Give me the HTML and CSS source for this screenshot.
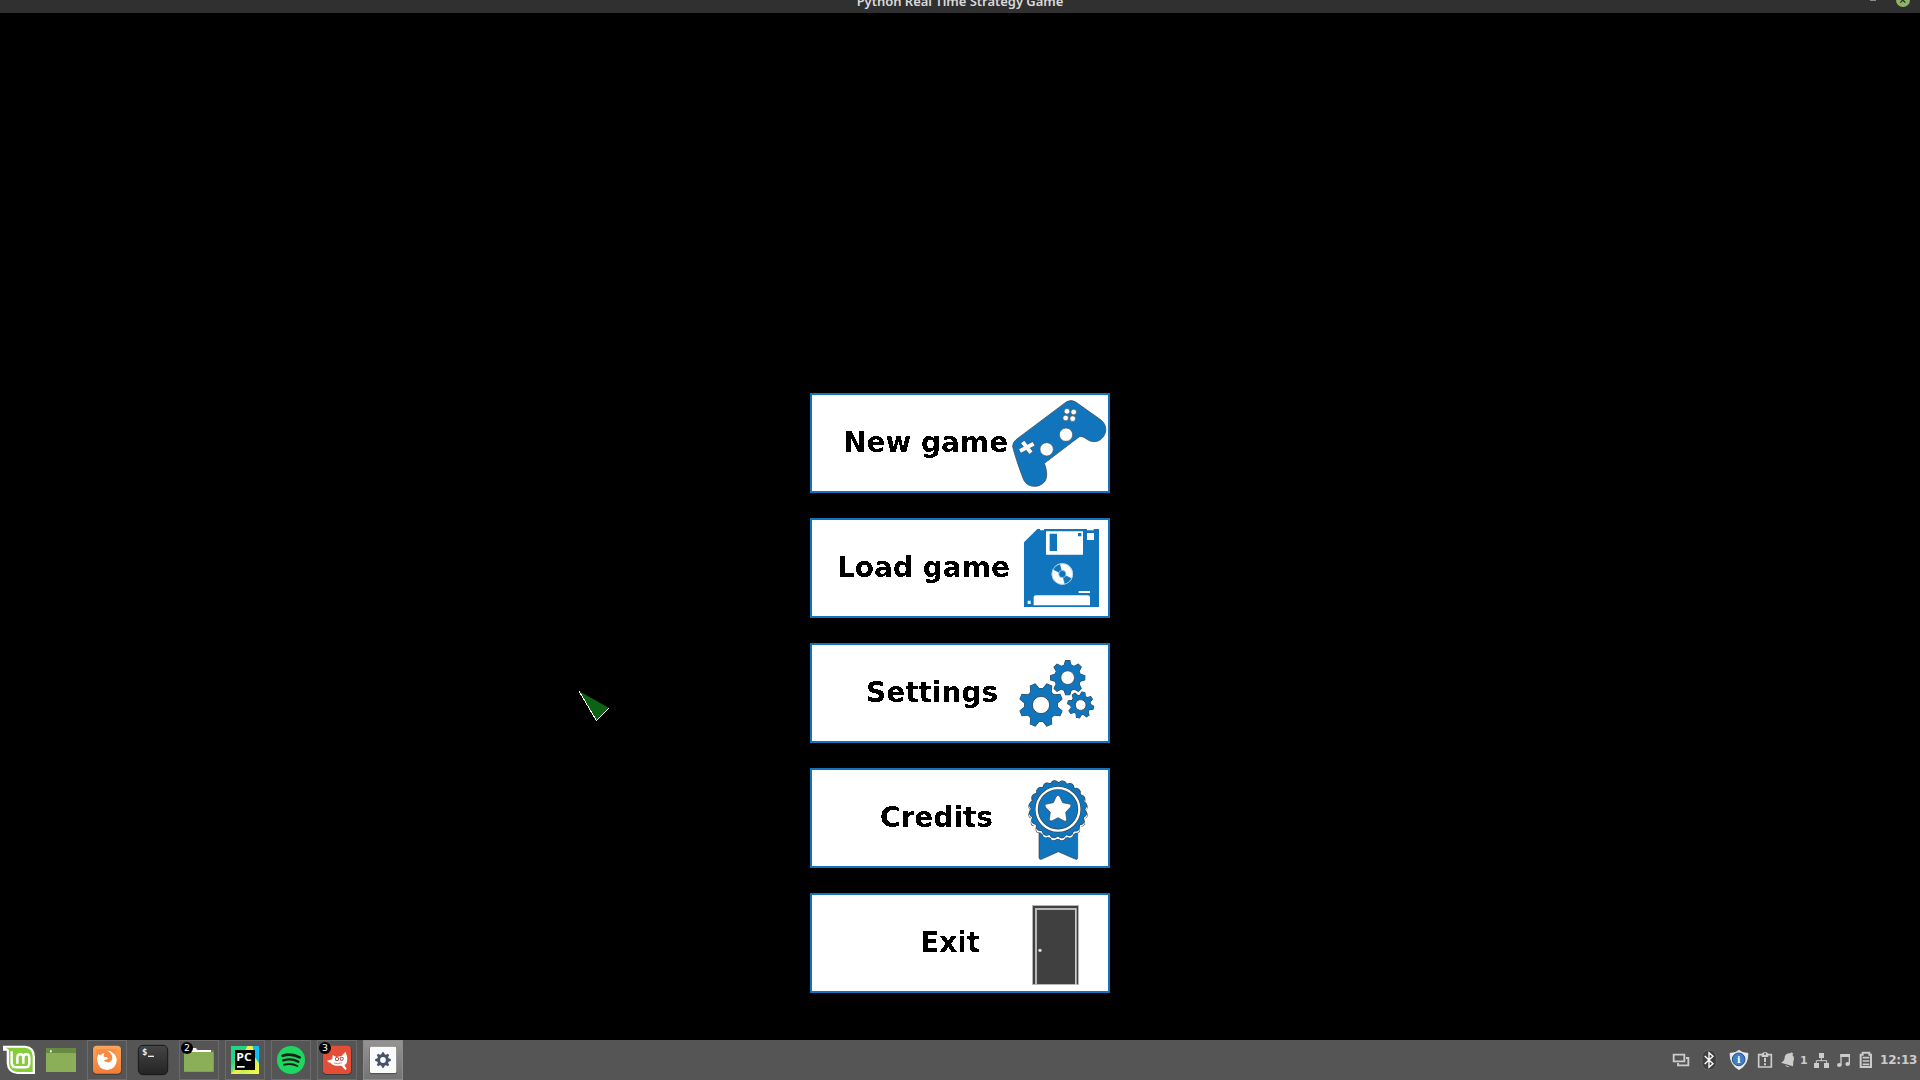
FILE: index.html
```html
<!DOCTYPE html>
<html lang="en">
<head>
<meta charset="utf-8">
<title>Python Real Time Strategy Game</title>
<link rel="stylesheet" href="styles.css">
</head>
<body>
<svg class="defs" width="0" height="0" aria-hidden="true">
  <defs>
    <filter id="crisp" x="0" y="0" width="100%" height="100%" color-interpolation-filters="sRGB">
      <feComponentTransfer><feFuncA type="discrete" tableValues="0 1"/></feComponentTransfer>
    </filter>
    <g id="gear">
      <circle r="49"/>
      <g id="bars"><path id="bar" d="M-14-45L-8-65H8L14-45V45L8 65H-8L-14 45Z"/><use href="#bar" transform="rotate(90)"/></g>
      <use href="#bars" transform="rotate(45)"/>
    </g>
    <linearGradient id="orange" x2="0" y2="1"><stop stop-color="#fba55b"/><stop offset="1" stop-color="#f37c35"/></linearGradient>
    <linearGradient id="dark" x2="0" y2="1"><stop stop-color="#454545"/><stop offset="1" stop-color="#242424"/></linearGradient>
    <linearGradient id="pc" x2="1" y2="1"><stop offset=".3" stop-color="#20d58a"/><stop offset=".65" stop-color="#c8ef55"/><stop offset="1" stop-color="#fcf84a"/></linearGradient>
  </defs>
</svg>

<header class="titlebar">
  <span class="title">Python Real Time Strategy Game</span>
  <svg class="controls" viewBox="0 0 240 39"><path fill="#8b8b8b" d="M90 0h18v3H90z"/><circle cx="189" cy="0" r="21" fill="#8fb368"/><path d="M181-8L196 8M196-8L181 8" stroke="#303030" stroke-width="4"/></svg>
</header>

<main class="game">
  <nav class="menu">
    <button class="item new"><span class="label">New game</span>
      <svg class="pic" viewBox="636 30 288 288">
        <path fill="#1175bd" stroke="#45515c" stroke-width="2.5" d="M800 50Q814 43 827 51L903 105C924 122 921 150 901 164C888 173 872 171 861 163Q844 149 834 158L733 235C740 253 744 276 734 290C717 310 685 308 673 288C667 277 641 202 638 184Q638 172 648 164Z"/>
        <g fill="#fff" stroke="#45515c" stroke-width="2"><circle cx="798" cy="149" r="20"/><circle cx="740" cy="193" r="20"/><circle cx="801" cy="79" r="8.5"/><circle cx="821" cy="81" r="8.5"/><circle cx="797" cy="99" r="8.5"/><circle cx="818" cy="101" r="8.5"/></g>
        <path d="M667 170L694 204M702 175L659 199" stroke="#45515c" stroke-width="15"/><path d="M668 171L693 203M701 176L660 198" stroke="#fff" stroke-width="12"/>
      </svg></button>
    <button class="item load"><span class="label">Load game</span>
      <svg class="pic" viewBox="636 30 288 288">
        <path fill="#1175bd" d="M712 57H897V291H672V97Z"/>
        <path fill="#fff" d="M738 64H849V134H738ZM861 69H882V90H861ZM720 57h12v4h-12zM861 57h20v4h-20zM836 243h34v6h-34zM683 272h9v10h-9zM701 286V262Q701 256 708 256H863Q870 256 870 262V286Z"/>
        <path fill="#1175bd" d="M749 71h22v52h-22zM834 69h10v10h-10z"/>
        <circle cx="787" cy="192" r="32" fill="#fff"/><path fill="#1175bd" d="M787 192L759 178A30 30 0 0 1 779 163ZM787 192L815 206A30 30 0 0 1 795 221Z"/><path d="M787 192L759 178M787 192L779 162M787 192L815 206M787 192L795 222" stroke="#1175bd" stroke-width="2"/><circle cx="787" cy="192" r="11" fill="#1175bd" stroke="#b9d7ec" stroke-width="2"/>
        <circle cx="787" cy="192" r="31" fill="none" stroke="#a4cae6" stroke-width="2"/>
      </svg></button>
    <button class="item settings"><span class="label">Settings</span>
      <svg class="pic" viewBox="636 30 288 288">
        <g fill="#1175bd">
          <g transform="translate(723 210) rotate(22.5)"><use href="#gear" stroke="#35414b" stroke-width="3"/><use href="#gear"/><circle r="26" fill="#fff" stroke="#35414b" stroke-width="2.5"/></g>
          <g transform="translate(803 128) scale(.79)"><use href="#gear" stroke="#35414b" stroke-width="4"/><use href="#gear"/><circle r="26" fill="#fff" stroke="#35414b" stroke-width="3"/></g>
          <g transform="translate(842 210) rotate(12) scale(.6)"><use href="#gear" stroke="#35414b" stroke-width="5"/><use href="#gear"/><circle r="27" fill="#fff" stroke="#35414b" stroke-width="4"/></g>
        </g>
      </svg></button>
    <button class="item credits"><span class="label">Credits</span>
      <svg class="pic" viewBox="636 30 288 288">
        <path fill="#1175bd" stroke="#35414b" stroke-width="2" d="M717 210H833V294Q832 301 825 297L775 275L724 298Q718 300 717 293Z"/>
        <g fill="none" stroke-linecap="round" transform="rotate(-9 774 153)"><circle cx="774" cy="153" r="80" stroke="#35414b" stroke-width="20" pathLength="20" stroke-dasharray="0 1"/><circle cx="774" cy="153" r="79" stroke="#fff" stroke-width="19" pathLength="20" stroke-dasharray="0 1"/></g>
        <circle cx="774" cy="153" r="84" fill="#fff"/>
        <g transform="rotate(-9 774 148)" fill="none" stroke-linecap="round"><circle cx="774" cy="148" r="75" stroke="#35414b" stroke-width="26" pathLength="20" stroke-dasharray="0 1"/><circle cx="774" cy="148" r="82" fill="#35414b"/><circle cx="774" cy="148" r="75" stroke="#1175bd" stroke-width="22" pathLength="20" stroke-dasharray="0 1"/></g>
        <circle cx="774" cy="148" r="80" fill="#1175bd"/>
        <circle cx="774" cy="148" r="64" fill="none" stroke="#35414b" stroke-width="11"/><circle cx="774" cy="148" r="64" fill="none" stroke="#fff" stroke-width="7"/>
        <path fill="#fff" stroke="#35414b" stroke-width="2" stroke-linejoin="round" d="M768 111Q774 101 780 111L788 128L808 132Q817 134 811 142L797 157L800 178Q799 187 791 182L774 173L757 182Q749 186 748 178L751 157L737 142Q731 134 740 132L760 128Z"/>
      </svg></button>
    <button class="item exit"><span class="label">Exit</span>
      <svg class="pic" viewBox="636 30 288 288">
        <path fill="#b4b4b4" d="M696 60H837V300H696Z"/><path fill="#404040" d="M699 63H834V297H699Z"/><path fill="#b7b7b7" d="M705 69H829V300H705Z"/><path fill="#404040" d="M711 75H825V297H711Z"/><path d="M828 70V300" stroke="#ddd" stroke-width="3"/><circle cx="720" cy="196" r="5" fill="#ddd"/>
      </svg></button>
  </nav>
  <svg class="pointer" viewBox="0 0 40 40"><path fill="#0c6412" d="M9 11L39 28L26 41Z"/><path d="M9 11L26.3 40.5L39 28" fill="none" stroke="#fff" shape-rendering="crispEdges"/></svg>
</main>

<footer class="panel">
  <div class="tasks">
    <svg class="mint" viewBox="0 30 105 120"><path fill="#fff" d="M9 47H76Q105 50 105 80V132H53Q22 130 20 99V62H9Z"/><path fill="#86cd39" d="M17 53H75Q98 55 98 80V126H53Q27 124 27 98V61Q26 56 17 53Z"/><path d="M35 64V98Q35 112 51 112H76Q88 112 88 99V84Q88 73 79 73Q70 73 70 84V101M70 84Q70 73 61 73Q52 73 52 84V101" fill="none" stroke="#fff" stroke-width="7.5"/></svg>
    <svg class="task" viewBox="123 30 120 120"><path fill="#8bae59" d="M138 54H228V126H138Z"/><path fill="#688b41" d="M138 54H228V69H138Z"/><path fill="#fff" d="M150 61h5v6h-5z"/></svg>
    <svg class="task open" viewBox="261 30 120 120"><rect x="278" y="48" width="86" height="86" rx="12" fill="#393939"/><rect x="279" y="47" width="84" height="84" rx="11" fill="url(#orange)"/><circle cx="321" cy="91" r="29" fill="#fff"/><path fill="#f78b42" d="M289 58H350L343 72Q336 63 322 61Q339 72 337 86Q335 95 327 97Q317 98 311 91L322 88Q326 84 321 82L312 80Q309 76 314 70Q305 70 302 76L295 73L290 85Z"/><path fill="#fff" d="M322 61Q343 66 350 90L340 97Q342 74 322 61ZM291 86L295 71Q297 78 303 76L311 81L306 94Z"/></svg>
    <svg class="task" viewBox="399 30 120 120"><rect x="415" y="46" width="88" height="88" rx="14" fill="url(#dark)" stroke="#181818" stroke-width="3"/><text class="term" x="426" y="74">$</text><path fill="#eee" d="M444 77h18v4h-18z"/></svg>
    <svg class="task open" viewBox="537 30 120 120"><path fill="#617e3e" d="M552 60H642V126H552Z"/><path fill="#fff" d="M552 54H588L592 60H633V68H552Z"/><rect x="552" y="66" width="89" height="59" rx="3" fill="#8bae59"/><circle cx="561" cy="54" r="18"/><text class="count" x="552" y="63">2</text></svg>
    <svg class="task open" viewBox="75 30 120 120"><path fill="url(#pc)" d="M93 48H177V132H93Z"/><path fill="#f3ed4c" d="M142 48H158L166 72V120H126L115 132H93L112 110Z"/><path fill="#0fbdee" d="M158 48H177V99L164 80Z"/><path d="M105 60H165V120H105Z"/><text class="pc" x="109" y="92" textLength="46" lengthAdjust="spacingAndGlyphs">PC</text><path fill="#fff" d="M111 108h23v5h-23z"/></svg>
    <svg class="task open" viewBox="213 30 120 120"><circle cx="273" cy="90" r="42" fill="#1ed760"/><g fill="none" stroke="#172019" stroke-linecap="round"><path stroke-width="8" d="M248 77Q275 69 299 82"/><path stroke-width="7" d="M250 91Q275 84 295 95"/><path stroke-width="6" d="M252 104Q274 98 292 108"/></g></svg>
    <svg class="task open" viewBox="351 30 120 120"><rect x="368" y="49" width="87" height="86" rx="12" fill="#393939"/><rect x="369" y="47" width="84" height="85" rx="11" fill="#e44d38"/><path fill="#fff" d="M398 75L409 81L425 78L436 65Q444 80 441 96Q440 103 433 105L440 116L436 120L424 107Q401 110 391 98Q385 98 381 92L397 88Z"/><circle cx="411" cy="87" r="6" fill="#a12b20"/><circle cx="425" cy="86" r="6" fill="#a12b20"/><circle cx="411" cy="87" r="3.5" fill="#fff"/><circle cx="425" cy="86" r="3.5" fill="#fff"/><path d="M402 99Q414 104 426 98" fill="none" stroke="#e44d38" stroke-width="2"/><circle cx="375" cy="54" r="18"/><text class="count" x="366" y="63">3</text></svg>
    <svg class="task open active" viewBox="489 30 120 120"><rect x="509" y="50" width="81" height="83" rx="4" fill="#555"/><rect x="510" y="50" width="79" height="79" rx="4" fill="#fafafa"/><g transform="translate(549 90) scale(.36)" fill="#465469"><use href="#gear"/><circle r="24" fill="#fafafa"/></g></svg>
  </div>
  <div class="tray">
    <svg class="w28" viewBox="21 30 84 120"><path d="M41 74H73V94H41Z M78 84H85V106H54V99" fill="none" stroke="#ccc" stroke-width="5.5"/></svg>
    <svg class="w28" viewBox="105 30 84 120"><rect x="126" y="60" width="43" height="60" rx="20" fill="#414141" stroke="#707070" stroke-width="2"/><path d="M134 78L159 101L147 112V68L159 79L134 102" fill="none" stroke="#fff" stroke-width="4"/></svg>
    <svg class="w31" viewBox="189 30 93 120"><path fill="#e9e9e9" stroke="#fff" stroke-width="2" d="M237 61Q247 70 264 70Q264 105 237 119Q210 105 210 70Q227 70 237 61Z"/><circle cx="236" cy="88" r="19" fill="#3f7fc8" stroke="#285087" stroke-width="3"/><text class="info" x="236" y="98">i</text></svg>
    <svg class="w23" viewBox="282 30 69 120"><path d="M296 74H334V111H296Z" fill="none" stroke="#ccc" stroke-width="5"/><path fill="#ccc" d="M305 72L310 67H320L325 72V81H305ZM312 83h6v13h-6zM312 100h6v6h-6z"/><circle cx="315" cy="72" r="3" fill="#555"/></svg>
    <svg class="w21" viewBox="351 30 63 120"><path fill="#ccc" d="M363 98Q374 94 374 82Q376 69 391 70L395 67L400 71L397 75Q405 82 400 94L399 109ZM375 105L388 110Q380 114 375 105Z"/></svg>
    <span class="notes">1</span>
    <svg class="w23" viewBox="450 30 69 120"><path fill="#ccc" d="M477 69h15v15h-15zM462 99h15v15h-15zM492 99h15v15h-15z"/><path d="M484 83V93M469 100V92H500V100" fill="none" stroke="#ccc" stroke-width="3"/></svg>
    <svg class="w23" viewBox="519 30 69 120"><path d="M543 105V75H568V101" fill="none" stroke="#ccc" stroke-width="4"/><path fill="#ccc" d="M541 72h29v9h-29z"/><ellipse cx="538" cy="105" rx="7" ry="6" fill="#ccc"/><ellipse cx="563" cy="102" rx="7" ry="6" fill="#ccc"/></svg>
    <svg class="w21" viewBox="588 30 63 120"><path d="M608 74V68H628V74H633V111H602V74Z" fill="none" stroke="#ccc" stroke-width="6"/><path d="M608 83H628M608 93H628M608 103H628" stroke="#ccc" stroke-width="5"/></svg>
    <span class="clock">12:13</span>
  </div>
</footer>
</body>
</html>
```
FILE: styles.css
```css
* { box-sizing: border-box; }
body {
  margin: 0;
  width: 1920px;
  height: 1080px;
  overflow: hidden;
  display: flex;
  flex-direction: column;
  background: #000;
  font-family: "DejaVu Sans", sans-serif;
}
.defs { position: absolute; }
.titlebar {
  height: 13px;
  flex: none;
  display: grid;
  grid-template-columns: 80px 1fr 80px;
  background: #303030;
  overflow: hidden;
}
.title {
  grid-column: 2;
  margin-top: -8px;
  text-align: center;
  font: 600 13px/18px "Noto Sans", sans-serif;
  letter-spacing: -0.03px;
  color: #dadada;
  white-space: nowrap;
}
.controls { width: 80px; height: 13px; }
.game { flex: 1; display: flex; justify-content: center; align-items: flex-start; padding-top: 380px; }
.menu { display: flex; flex-direction: column; gap: 25px; width: 300px; }
.item {
  display: flex;
  align-items: center;
  height: 100px;
  padding: 0;
  border: 2px solid #1175bd;
  border-radius: 0;
  background: #fff;
}
.label {
  flex: 1;
  text-align: left;
  font: bold 28px/34px "DejaVu Sans", sans-serif;
  color: #000;
  white-space: nowrap;
  filter: url(#crisp);
}
.pic { width: 96px; height: 96px; flex: none; margin-left: -10px; }
.new .label { padding-left: 31px; }
.load .label { padding-left: 25px; }
.settings .label { padding-left: 54px; }
.credits .label { padding-left: 68px; }
.exit .label { padding-left: 108px; }
.pointer { position: absolute; left: 570px; top: 680px; width: 40px; height: 40px; overflow: visible; }

.panel { height: 40px; flex: none; display: flex; justify-content: space-between; background: #555; }
.tasks { display: flex; gap: 6px; }
.mint { width: 35px; height: 40px; }
.task { width: 40px; height: 40px; }
.open { box-shadow: inset 0 0 0 1px #6b6b6b; }
.active { background: linear-gradient(#949494, #747474); box-shadow: inset 0 0 0 1px #8c8c8c; }
.term { font: bold 27px "DejaVu Sans Mono", monospace; fill: #eee; }
.count { font: 28px "DejaVu Sans", sans-serif; fill: #fff; }
.pc { font: bold 34px "Open Sans", sans-serif; fill: #fff; }
.info { font: bold 28px "DejaVu Serif", serif; fill: #fff; text-anchor: middle; }
.tray { display: flex; align-items: center; color: #ccc; font-weight: bold; }
.tray svg { height: 40px; flex: none; }
.w21 { width: 21px; }
.w23 { width: 23px; }
.w28 { width: 28px; }
.w31 { width: 31px; }
.notes { width: 12px; padding-left: 2px; font-size: 11px; }
.clock { width: 43px; padding-left: 3px; font-size: 12px; letter-spacing: -0.2px; white-space: nowrap; }
```
